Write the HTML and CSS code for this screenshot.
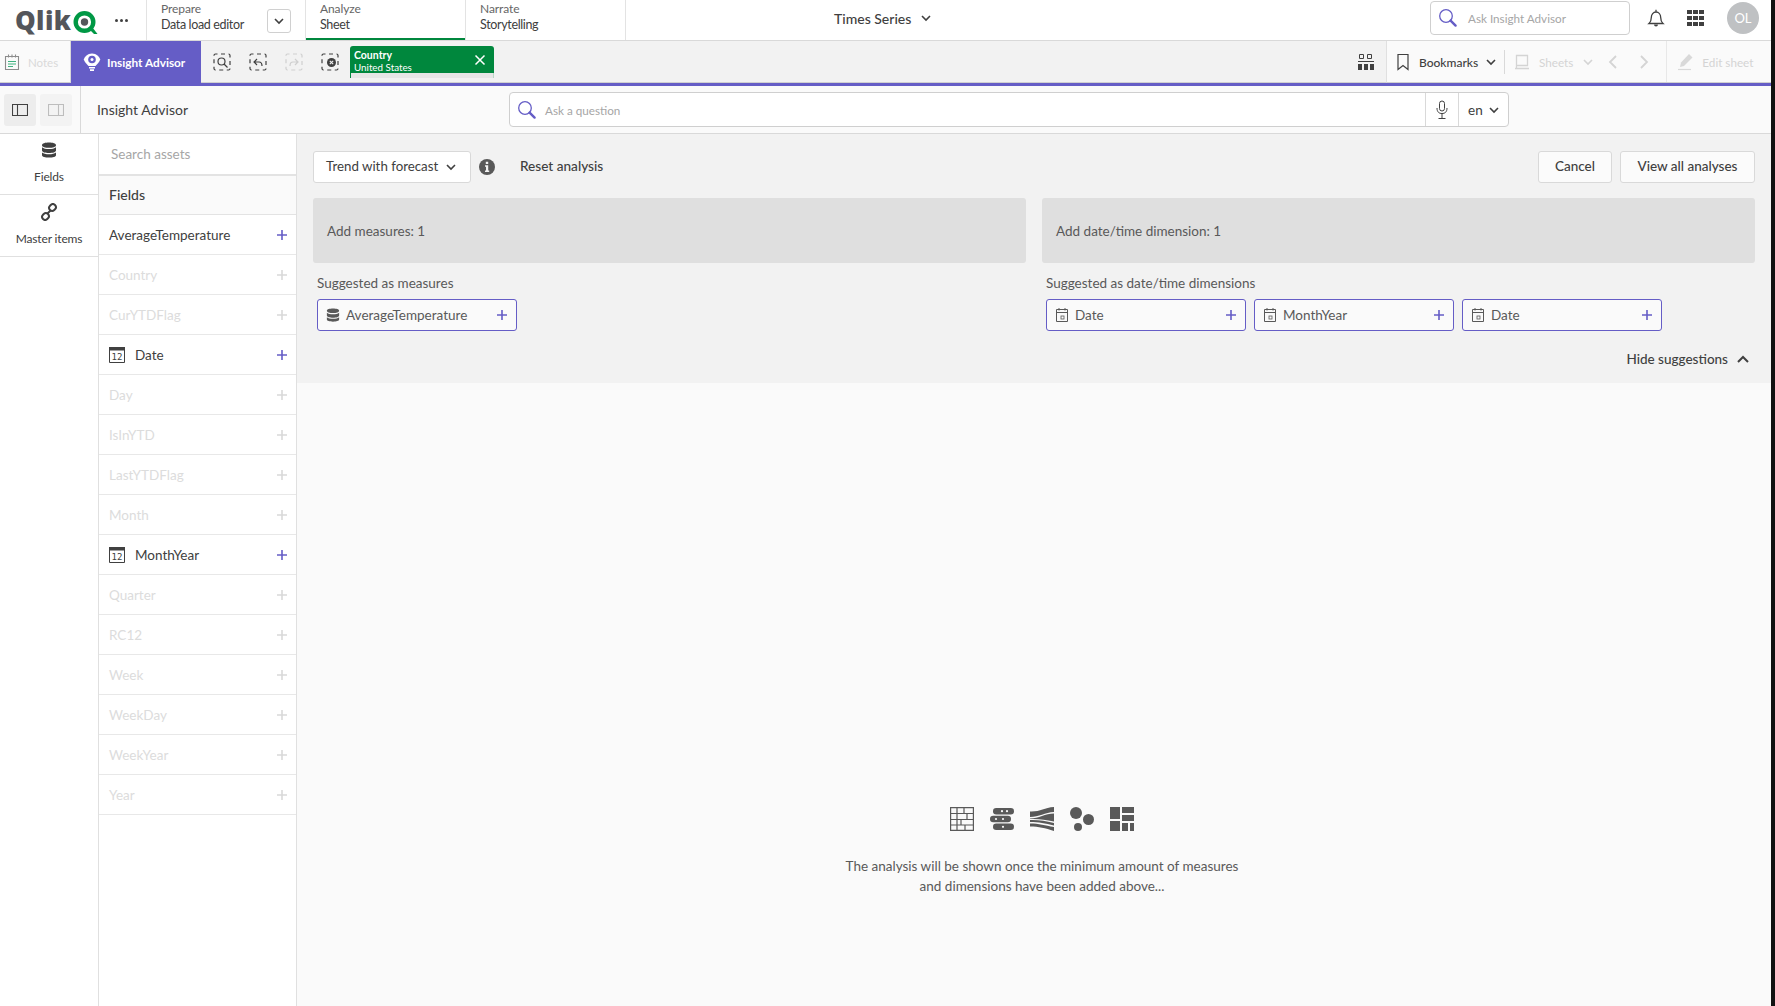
FILE: index.html
```html
<!DOCTYPE html>
<html lang="en">
<head>
<meta charset="utf-8">
<title>Insight Advisor</title>
<link rel="stylesheet" href="styles.css">
</head>
<body>
<svg class="defs" width="0" height="0">
  <defs>
    <symbol id="search" viewBox="0 0 20 20"><circle cx="8" cy="8" r="6.3" fill="none" stroke="#655dc6" stroke-width="1.3"/><path d="M12.6 12.6l5 5" stroke="#655dc6" stroke-width="2.4" stroke-linecap="round"/></symbol>
    <symbol id="chev" viewBox="0 0 12 12"><path d="M2 4l4 4 4-4" fill="none" stroke="currentColor" stroke-width="1.6"/></symbol>
    <symbol id="plus" viewBox="0 0 12 12"><path d="M6 1v10M1 6h10" stroke="currentColor" stroke-width="1.6"/></symbol>
    <symbol id="db" viewBox="0 0 16 16"><path fill="currentColor" d="M1 3.2C1 1.4 4.2.6 8 .6s7 .8 7 2.6-3.2 2.6-7 2.6-7-.8-7-2.6zM1 5.3C2.5 6.7 5 7 8 7s5.500-.3 7-1.700v3.200C15 10.200 11.800 11 8 11S1 10.200 1 8.500zM1 10.500C2.500 11.900 5 12.200 8 12.200s5.500-.3 7-1.700v2.700C15 14.900 11.800 15.600 8 15.600S1 14.900 1 13.200z"/></symbol>
    <symbol id="cal" viewBox="0 0 14 16"><path fill="none" stroke="currentColor" d="M1.500 2.500h11v12h-11zM1.500 5.500h11M4 1v2.500M10 1v2.500"/><rect x="6" y="9" width="3" height="3" fill="none" stroke="currentColor" stroke-width=".8"/></symbol>
  </defs>
</svg>
<div class="app">
  <header class="topbar">
    <div class="brand">
      <span class="qlik">Qlik</span>
      <svg class="qmark" width="25" height="24" viewBox="0 0 25 24"><circle cx="11.500" cy="11" r="8.800" fill="none" stroke="#009845" stroke-width="4.400"/><circle cx="11.500" cy="11" r="3.700" fill="#54565b"/><path d="M15 17l6 6h3.500l-5-6.500z" fill="#009845"/></svg>
      <span class="dots"><i></i><i></i><i></i></span>
    </div>
    <div class="nav-tab nav-prepare"><span class="nav-top">Prepare</span><span class="nav-main">Data load editor</span>
      <span class="nav-drop"><svg width="12" height="12"><use href="#chev"/></svg></span></div>
    <div class="nav-tab nav-active"><span class="nav-top">Analyze</span><span class="nav-main">Sheet</span></div>
    <div class="nav-tab"><span class="nav-top">Narrate</span><span class="nav-main">Storytelling</span></div>
    <div class="app-title">Times Series<svg width="12" height="12"><use href="#chev"/></svg></div>
    <div class="top-search"><svg width="20" height="20"><use href="#search"/></svg><span>Ask Insight Advisor</span></div>
    <svg class="bell" width="18" height="20" viewBox="0 0 18 20"><path fill="none" stroke="#404040" stroke-width="1.300" d="M2 15.500c1.800-1.500 2.300-3 2.300-6 0-3.200 2-5.500 4.700-5.500s4.700 2.300 4.700 5.500c0 3 .5 4.500 2.300 6zM9 1.800V4"/><path d="M7 16.500a2 2 0 0 0 4 0z" fill="#404040"/></svg>
    <div class="apps"><i></i><i></i><i></i><i></i><i></i><i></i><i></i><i></i><i></i></div>
    <div class="avatar">OL</div>
  </header>

  <div class="toolbar">
    <div class="tb-notes">
      <svg width="16" height="18" viewBox="0 0 16 18"><path fill="none" stroke="#8c8c8c" stroke-width="1.100" d="M1.500 3.500h13v13h-13zM4.500 1.500v3M8 1.500v3M11.500 1.500v3"/><path stroke="#3fb27f" stroke-width="1.200" d="M4 8.500h8M4 11h8M4 13.500h5"/></svg>
      <span>Notes</span>
    </div>
    <div class="tb-insight">
      <svg width="18" height="20" viewBox="0 0 18 20"><path fill="#fff" d="M9 1.500C4.500 1.500 1.500 5 .8 7.500c.7 2.500 3 4.800 4.700 6.500h7c1.700-1.700 4-4 4.700-6.500C16.500 5 13.500 1.500 9 1.500z"/><circle cx="9" cy="7.500" r="3.800" fill="#655dc6"/><circle cx="9" cy="7.500" r="1.500" fill="#fff"/><path fill="#fff" d="M6 15h6v1.500H6zM7 17.300h4V19H7z"/></svg>
      <span>Insight Advisor</span>
    </div>
    <div class="tb-middle">
      <div class="sel-tools">
        <svg class="st" width="18" height="18" viewBox="0 0 18 18"><rect x="1" y="1" width="16" height="16" rx="1.500" class="dash"/><circle cx="8.500" cy="8.500" r="3.500" class="ln"/><path d="M11 11l3.500 3.500" class="ln"/></svg>
        <svg class="st" width="18" height="18" viewBox="0 0 18 18"><rect x="1" y="1" width="16" height="16" rx="1.500" class="dash"/><path d="M8 6L5 9l3 3M5 9h5c2 0 3 1 3 4" class="ln"/></svg>
        <svg class="st st-off" width="18" height="18" viewBox="0 0 18 18"><rect x="1" y="1" width="16" height="16" rx="1.500" class="dash"/><path d="M10 6l3 3-3 3M13 9H8c-2 0-3 1-3 4" class="ln"/></svg>
        <svg class="st" width="18" height="18" viewBox="0 0 18 18"><rect x="1" y="1" width="16" height="16" rx="1.500" class="dash"/><circle cx="10.500" cy="9.500" r="4.500" fill="#404040"/><path d="M8.800 7.800l3.400 3.400M12.200 7.800l-3.400 3.400" stroke="#f2f2f2" stroke-width="1.100"/></svg>
      </div>
      <div class="chip-sel">
        <div class="chip-green">
          <div class="chip-txt"><span class="chip-f">Country</span><span class="chip-v">United States</span></div>
          <svg width="12" height="12" viewBox="0 0 12 12"><path d="M1.500 1.500l9 9M10.500 1.500l-9 9" stroke="#fff" stroke-width="1.500"/></svg>
        </div>
        <div class="chip-bar"></div>
      </div>
      <svg class="grid-ic" width="16" height="18" viewBox="0 0 16 18"><path fill="none" stroke="#404040" d="M1.500 1.500h4v4h-4zM9.500 1.500h4v4h-4z"/><path fill="#404040" d="M0 8h16v1H0zM0 11h4v6H0zM6 11h4v6H6zM12 11h4v6h-4z"/></svg>
    </div>
    <div class="tb-right">
      <svg class="bm" width="12" height="18" viewBox="0 0 12 18"><path fill="none" stroke="#404040" stroke-width="1.200" d="M1 1.500h10v15l-5-4-5 4z"/></svg>
      <span class="bm-txt">Bookmarks</span>
      <svg class="bm-chev" width="12" height="12"><use href="#chev"/></svg>
      <span class="tb-sep"></span>
      <svg class="off-ic" width="16" height="16" viewBox="0 0 16 16"><path fill="none" stroke="#d4d4d4" stroke-width="1.300" d="M2.500 1.500h11v10h-11zM1 14.500h14M2.500 11.500v3"/></svg>
      <span class="off-txt off-sheets">Sheets</span>
      <svg class="off-chev" width="12" height="12"><use href="#chev"/></svg>
      <svg class="off-l" width="10" height="14" viewBox="0 0 10 14"><path d="M8 1L2 7l6 6" fill="none" stroke="#d4d4d4" stroke-width="1.800"/></svg>
      <svg class="off-r" width="10" height="14" viewBox="0 0 10 14"><path d="M2 1l6 6-6 6" fill="none" stroke="#d4d4d4" stroke-width="1.800"/></svg>
      <span class="tb-edge"></span>
      <svg class="edit-ic" width="16" height="18" viewBox="0 0 16 18"><path fill="#d9d9d9" d="M11 1l3.500 3.500L6 13l-4 1 1-4.500z"/><path d="M0 16.500h13" stroke="#d9d9d9" stroke-width="1.200"/></svg>
      <span class="off-txt off-edit">Edit sheet</span>
    </div>
  </div>

  <div class="subbar">
    <div class="toggles">
      <span class="tog tog-on"><svg width="16" height="12" viewBox="0 0 16 12"><path fill="none" stroke="#404040" stroke-width="1.100" d="M.5.500h15v11H.5zM5.500.500v11"/></svg></span>
      <span class="tog"><svg width="16" height="12" viewBox="0 0 16 12"><path fill="none" stroke="#bdbdbd" stroke-width="1.100" d="M.5.500h15v11H.5zM10.500.500v11"/></svg></span>
    </div>
    <div class="sub-title">Insight Advisor</div>
    <div class="ask">
      <div class="ask-input"><svg width="20" height="20"><use href="#search"/></svg><span>Ask a question</span></div>
      <div class="ask-mic"><svg width="12" height="20" viewBox="0 0 12 20"><rect x="3.500" y="1" width="5" height="10" rx="2.500" fill="none" stroke="#404040"/><path d="M1 8c0 4 2 5.500 5 5.500S11 12 11 8M6 13.500V18M2.500 18.500h7" fill="none" stroke="#404040"/></svg></div>
      <div class="ask-lang">en<svg width="12" height="12"><use href="#chev"/></svg></div>
    </div>
  </div>

  <div class="workspace">
    <nav class="rail">
      <div class="rail-item rail-fields">
        <svg width="16" height="16"><use href="#db"/></svg><span>Fields</span>
      </div>
      <div class="rail-item rail-master">
        <svg width="18" height="18" viewBox="0 0 18 18"><g fill="none" stroke="#404040" stroke-width="2"><path d="M7.500 10.500l3-3"/><rect x="9" y="1.500" width="7" height="6" rx="3" transform="rotate(-45 12.500 4.500)"/><rect x="2" y="10.500" width="7" height="6" rx="3" transform="rotate(-45 5.500 13.500)"/></g></svg><span>Master items</span>
      </div>
    </nav>
    <aside class="assets">
      <div class="assets-search">Search assets</div>
      <div class="assets-head">Fields</div>
      <div class="row"><span>AverageTemperature</span><svg width="12" height="12"><use href="#plus"/></svg></div>
      <div class="row row-off"><span>Country</span><svg width="12" height="12"><use href="#plus"/></svg></div>
      <div class="row row-off"><span>CurYTDFlag</span><svg width="12" height="12"><use href="#plus"/></svg></div>
      <div class="row"><svg class="cal12" width="16" height="17" viewBox="0 0 16 17"><path fill="none" stroke="#404040" d="M.5 1.500h15v15H.5z"/><path fill="#404040" d="M0 1h16v3.500H0z"/><text x="8" y="14" text-anchor="middle" class="cal-num">12</text></svg><span>Date</span><svg width="12" height="12"><use href="#plus"/></svg></div>
      <div class="row row-off"><span>Day</span><svg width="12" height="12"><use href="#plus"/></svg></div>
      <div class="row row-off"><span>IsInYTD</span><svg width="12" height="12"><use href="#plus"/></svg></div>
      <div class="row row-off"><span>LastYTDFlag</span><svg width="12" height="12"><use href="#plus"/></svg></div>
      <div class="row row-off"><span>Month</span><svg width="12" height="12"><use href="#plus"/></svg></div>
      <div class="row"><svg class="cal12" width="16" height="17" viewBox="0 0 16 17"><path fill="none" stroke="#404040" d="M.5 1.500h15v15H.5z"/><path fill="#404040" d="M0 1h16v3.500H0z"/><text x="8" y="14" text-anchor="middle" class="cal-num">12</text></svg><span>MonthYear</span><svg width="12" height="12"><use href="#plus"/></svg></div>
      <div class="row row-off"><span>Quarter</span><svg width="12" height="12"><use href="#plus"/></svg></div>
      <div class="row row-off"><span>RC12</span><svg width="12" height="12"><use href="#plus"/></svg></div>
      <div class="row row-off"><span>Week</span><svg width="12" height="12"><use href="#plus"/></svg></div>
      <div class="row row-off"><span>WeekDay</span><svg width="12" height="12"><use href="#plus"/></svg></div>
      <div class="row row-off"><span>WeekYear</span><svg width="12" height="12"><use href="#plus"/></svg></div>
      <div class="row row-off"><span>Year</span><svg width="12" height="12"><use href="#plus"/></svg></div>
    </aside>
    <main class="main">
      <section class="panel">
        <div class="controls">
          <div class="btn btn-drop">Trend with forecast<svg width="12" height="12"><use href="#chev"/></svg></div>
          <svg class="info" width="16" height="16" viewBox="0 0 16 16"><circle cx="8" cy="8" r="8" fill="#595959"/><path fill="#f2f2f2" d="M6.800 2.800h2.400v2.200H6.800zM6 6.300h3.200v5.200h1v1.500H6v-1.500h1V7.800H6z"/></svg>
          <span class="reset">Reset analysis</span>
          <div class="btn btn-cancel">Cancel</div>
          <div class="btn btn-view">View all analyses</div>
        </div>
        <div class="columns">
          <div class="col">
            <div class="drop">Add measures: 1</div>
            <div class="sug-label">Suggested as measures</div>
            <div class="chips">
              <div class="chip"><svg class="ci" width="14" height="14"><use href="#db"/></svg><span>AverageTemperature</span><svg class="cp" width="12" height="12"><use href="#plus"/></svg></div>
            </div>
          </div>
          <div class="col">
            <div class="drop">Add date/time dimension: 1</div>
            <div class="sug-label">Suggested as date/time dimensions</div>
            <div class="chips">
              <div class="chip"><svg class="ci" width="14" height="16"><use href="#cal"/></svg><span>Date</span><svg class="cp" width="12" height="12"><use href="#plus"/></svg></div>
              <div class="chip"><svg class="ci" width="14" height="16"><use href="#cal"/></svg><span>MonthYear</span><svg class="cp" width="12" height="12"><use href="#plus"/></svg></div>
              <div class="chip"><svg class="ci" width="14" height="16"><use href="#cal"/></svg><span>Date</span><svg class="cp" width="12" height="12"><use href="#plus"/></svg></div>
            </div>
          </div>
        </div>
        <div class="hide-row"><span>Hide suggestions</span><svg width="14" height="10" viewBox="0 0 14 10"><path d="M2 8l5-5 5 5" fill="none" stroke="#404040" stroke-width="2"/></svg></div>
      </section>
      <section class="empty">
        <div class="empty-icons">
          <svg width="24" height="24" viewBox="0 0 24 24"><path fill="none" stroke="#595959" stroke-width="1.200" d="M.6.600h22.800v22.800H.6zM7 .6v22.800M.6 6.500h22.800M.6 12.500h22.800M.6 18h22.800M14 .6v6M17 6.500v6M11 12.500V18M15 18v5.400"/></svg>
          <svg width="24" height="24" viewBox="0 0 24 24"><g fill="#595959"><rect x="3" y="1" width="21" height="6.500" rx="3.200"/><rect y="8.800" width="21" height="6.500" rx="3.200"/><rect x="3" y="16.500" width="21" height="6.500" rx="3.200"/></g><g fill="#fafafa"><circle cx="12" cy="4.200" r="1.100"/><circle cx="17" cy="4.200" r="1.100"/><circle cx="6" cy="12" r="1.100"/><circle cx="13" cy="12" r="1.100"/><circle cx="13" cy="19.800" r="1.100"/></g></svg>
          <svg width="24" height="24" viewBox="0 0 24 24"><path fill="#595959" d="M0 4.500C10 5 14 .5 24 0v5C15 5.500 9 10 0 10zM0 11.500C9 11.500 15 6.500 24 6.500v8c-9-2-15-2.800-24-2.500zM0 13c9-.3 15 1 24 3v2.500C15 16.500 9 15 0 15zM0 16.500c9 0 15 2 24 3.500v4c-9-3-15-4.500-24-4.500z"/></svg>
          <svg width="24" height="24" viewBox="0 0 24 24"><circle cx="6" cy="6" r="6" fill="#595959"/><circle cx="18.500" cy="12.500" r="5.500" fill="#595959"/><circle cx="8" cy="20" r="4" fill="#595959"/></svg>
          <svg width="24" height="24" viewBox="0 0 24 24"><path fill="#595959" d="M0 0h10v12H0zM12 0h12v6H12zM12 8h12v6H12zM0 14h10v10H0zM12 16h6v8h-6zM20 16h4v8h-4z"/></svg>
        </div>
        <p class="empty-msg">The analysis will be shown once the minimum amount of measures<br>and dimensions have been added above...</p>
      </section>
    </main>
  </div>
</div>
</body>
</html>
```

FILE: styles.css
```css
* { box-sizing: border-box; }
html, body { margin: 0; height: 100%; }
body {
  background: #111;
  font-family: "Lato", "Open Sans", sans-serif;
  font-size: 13.5px;
  color: #404040;
  overflow: hidden;
}
.defs { position: absolute; }
svg { display: block; flex: none; }
.app {
  width: 1771px;
  height: 1006px;
  display: flex;
  flex-direction: column;
  background: #fff;
  overflow: hidden;
}

/* top bar */
.topbar {
  height: 41px;
  flex: none;
  display: flex;
  align-items: stretch;
  padding-right: 12px;
  border-bottom: 1px solid #d9d9d9;
  background: #fff;
}
.brand {
  width: 147px;
  display: flex;
  align-items: center;
  padding-left: 15px;
  border-right: 1px solid #e3e3e3;
}
.qlik {
  font-family: "Open Sans", sans-serif;
  font-weight: 800;
  font-size: 26px;
  line-height: 36px;
  letter-spacing: .4px;
  color: #54565b;
  width: 58px;
}
.qmark { margin-top: 5px; }
.dots { display: flex; gap: 2px; margin-left: 17px; }
.dots i { width: 3px; height: 3px; border-radius: 50%; background: #404040; }
.nav-tab {
  position: relative;
  width: 160px;
  display: flex;
  flex-direction: column;
  padding: 1px 0 0 14px;
  border-right: 1px solid #e3e3e3;
  line-height: 16px;
}
.nav-prepare { width: 159px; }
.nav-top { font-size: 12px; letter-spacing: -.1px; color: #666; }
.nav-main { font-size: 12.500px; letter-spacing: -.35px; color: #404040; }
.nav-active { box-shadow: inset 0 -2px 0 #00873d; }
.nav-drop {
  position: absolute;
  left: 120px;
  top: 9px;
  width: 24px;
  height: 24px;
  border: 1px solid #d0d0d0;
  border-radius: 3px;
  display: flex;
  align-items: center;
  justify-content: center;
}
.app-title {
  margin-left: 208px;
  display: flex;
  align-items: center;
  gap: 9px;
  font-size: 14px;
  font-weight: 500;
  padding-bottom: 4px;
}
.top-search {
  margin-left: auto;
  width: 200px;
  height: 34px;
  margin-top: 1px;
  border: 1px solid #cfcfcf;
  border-radius: 4px;
  display: flex;
  align-items: center;
  padding-left: 7px;
  gap: 10px;
  font-size: 11.700px;
  color: #a6a6a6;
}
.bell { margin: 8px 0 0 17px; }
.apps {
  margin: 10px 0 0 22px;
  width: 17px;
  height: 16px;
  display: grid;
  grid-template-columns: repeat(3, 5px);
  grid-template-rows: repeat(3, 4px);
  gap: 2px 1px;
}
.apps i { background: #404040; }
.avatar {
  margin: 2px 0 0 23px;
  width: 32px;
  height: 32px;
  border-radius: 50%;
  background: #bfc1c3;
  color: #fff;
  font-size: 13px;
  display: flex;
  align-items: center;
  justify-content: center;
}

/* toolbar */
.toolbar {
  height: 45px;
  flex: none;
  display: flex;
  border-bottom: 3px solid #655dc6;
}
.tb-notes {
  width: 71px;
  display: flex;
  align-items: center;
  padding-left: 4px;
  gap: 8px;
  background: #fafafa;
  color: #d9d9d9;
  font-size: 11.500px;
  border-bottom: 1px solid #d0d0d0;
  border-right: 1px solid #d9d9d9;
}
.tb-notes span, .tb-insight span { padding-top: 1px; }
.tb-insight {
  width: 130px;
  display: flex;
  align-items: center;
  padding-left: 12px;
  gap: 6px;
  background: #655dc6;
  color: #fff;
  font-size: 11.800px;
  font-weight: 700;
}
.tb-middle {
  width: 1185px;
  display: flex;
  align-items: center;
  background: #f2f2f2;
  border-bottom: 1px solid #d0d0d0;
  padding-left: 12px;
}
.sel-tools { display: flex; gap: 18px; }
.dash { fill: none; stroke: #404040; stroke-width: 1.200; stroke-dasharray: 4 3.500; stroke-dashoffset: 2; }
.ln { fill: none; stroke: #404040; stroke-width: 1.200; }
.st-off .dash, .st-off .ln { stroke: #cfcfcf; }
.chip-sel {
  margin-left: 11px;
  width: 144px;
  height: 32px;
  margin-top: 1px;
  display: flex;
  flex-direction: column;
}
.chip-green {
  height: 27px;
  background: #00873d;
  border-radius: 3px 3px 0 0;
  display: flex;
  align-items: center;
  justify-content: space-between;
  padding: 0 8px 0 4px;
  color: #fff;
}
.chip-txt { display: flex; flex-direction: column; padding-top: 3px; }
.chip-f { font-size: 10.500px; line-height: 12px; font-weight: 700; }
.chip-v { font-size: 9.800px; line-height: 12px; }
.chip-bar { height: 5px; background: #e6e6e6; border-left: 1px solid #00873d; border-right: 1px solid #b6d9c5; }
.grid-ic { margin-left: auto; margin-right: 12px; }
.tb-right {
  flex: 1;
  display: flex;
  align-items: center;
  background: #fafafa;
  border-left: 1px solid #e0e0e0;
  border-bottom: 1px solid #d0d0d0;
}
.bm { margin-left: 10px; }
.bm-txt { margin-left: 10px; width: 60px; padding-top: 2px; font-size: 12px; font-weight: 500; white-space: nowrap; }
.bm-chev { margin-left: 6px; }
.tb-sep { width: 1px; height: 24px; background: #d9d9d9; margin-left: 7px; }
.off-ic { margin-left: 9px; }
.off-txt { margin-left: 9px; padding-top: 1px; color: #d4d4d4; white-space: nowrap; }
.off-sheets { font-size: 11.700px; }
.off-edit { margin-left: 8px; font-size: 11.700px; }
.off-chev { margin-left: 9px; color: #d4d4d4; }
.off-l { margin-left: 14px; }
.off-r { margin-left: 21px; }
.tb-edge { width: 1px; align-self: stretch; background: #e8e8e8; margin-left: 17px; }
.edit-ic { margin-left: 11px; }

/* sub bar */
.subbar {
  height: 48px;
  flex: none;
  display: flex;
  align-items: center;
  background: #fafafa;
  border-bottom: 1px solid #d9d9d9;
}
.toggles {
  width: 81px;
  height: 47px;
  display: flex;
  align-items: center;
  padding-left: 4px;
  gap: 4px;
  border-right: 1px solid #d9d9d9;
}
.tog {
  width: 32px;
  height: 32px;
  border-radius: 3px;
  background: #f3f3f3;
  display: flex;
  align-items: center;
  justify-content: center;
}
.tog-on { background: #ededed; }
.sub-title { margin-left: 16px; width: 412px; font-size: 14px; }
.ask {
  width: 1000px;
  height: 35px;
  display: flex;
  background: #fff;
  border: 1px solid #cfcfcf;
  border-radius: 4px;
}
.ask-input {
  width: 916px;
  display: flex;
  align-items: center;
  padding-left: 7px;
  gap: 8px;
  font-size: 11.700px;
  color: #a6a6a6;
  border-right: 1px solid #d9d9d9;
}
.ask-input span { padding-top: 1px; }
.ask-mic {
  width: 33px;
  display: flex;
  align-items: center;
  justify-content: center;
  border-right: 1px solid #d9d9d9;
}
.ask-lang {
  flex: 1;
  display: flex;
  align-items: center;
  padding-left: 9px;
  gap: 5px;
  font-size: 13.500px;
}

/* workspace */
.workspace { flex: 1; display: flex; min-height: 0; }
.rail { width: 99px; flex: none; border-right: 1px solid #e0e0e0; background: #fff; }
.rail-item {
  height: 62px;
  display: flex;
  flex-direction: column;
  align-items: center;
  border-bottom: 1px solid #e0e0e0;
  font-size: 12px;
  letter-spacing: -.15px;
  line-height: 16px;
}
.rail-fields { height: 61px; padding-top: 8px; gap: 11px; }
.rail-master { padding-top: 8px; gap: 10px; }
.assets { width: 198px; flex: none; border-right: 1px solid #e0e0e0; background: #fff; }
.assets-search {
  height: 42px;
  padding: 11px 0 0 12px;
  line-height: 18px;
  color: #a6a6a6;
  border-bottom: 2px solid #e3e3e3;
}
.assets-head {
  height: 39px;
  display: flex;
  align-items: center;
  padding: 0 0 1px 10px;
  background: #fafafa;
  font-weight: 500;
  font-size: 14px;
  border-bottom: 1px solid #e3e3e3;
}
.row {
  height: 40px;
  display: flex;
  align-items: center;
  padding: 0 8px 0 10px;
  border-bottom: 1px solid #e8e8e8;
  color: #404040;
}
.row > span { flex: 1; }
.row > svg:last-child { color: #655dc6; }
.row-off { color: #dcdcdc; }
.row-off > svg:last-child { color: #d9d9d9; }
.cal12 { margin-right: 10px; }
.cal-num { font-family: "DejaVu Sans Mono", monospace; font-size: 9px; fill: #404040; }

/* main */
.main { flex: 1; display: flex; flex-direction: column; min-width: 0; }
.panel { height: 249px; flex: none; background: #f2f2f2; padding: 17px 16px 0; }
.controls { display: flex; align-items: center; height: 32px; }
.btn {
  height: 32px;
  padding-bottom: 2px;
  background: #fff;
  border: 1px solid #d9d9d9;
  border-radius: 3px;
  display: flex;
  align-items: center;
  font-size: 13.500px;
  white-space: nowrap;
}
.btn svg { margin-top: 2px; }
.btn-drop { width: 158px; padding-left: 12px; justify-content: space-between; padding-right: 13px; background: #fff; font-size: 13.300px; }
.info { margin-left: 8px; }
.reset { margin-left: 25px; padding-bottom: 2px; font-weight: 500; font-size: 13.600px; }
.btn-cancel { margin-left: auto; width: 74px; justify-content: center; background: #fbfbfb; font-weight: 500; }
.btn-view { margin-left: 8px; width: 135px; justify-content: center; background: #fbfbfb; font-weight: 500; }
.columns { display: grid; grid-template-columns: 1fr 1fr; gap: 16px; margin-top: 15px; }
.drop {
  height: 65px;
  background: #dfdfdf;
  border-radius: 3px;
  display: flex;
  align-items: center;
  padding: 0 14px;
  color: #595959;
}
.sug-label { margin: 10px 0 6px 4px; line-height: 20px; color: #595959; }
.chips { display: flex; gap: 8px; margin-left: 4px; }
.chip {
  width: 200px;
  height: 32px;
  display: flex;
  align-items: center;
  background: #fafafa;
  border: 1.500px solid #655dc6;
  border-radius: 3px;
  padding: 0 8px;
  color: #595959;
}
.chip .ci { color: #595959; margin-right: 6px; }
.chip span { flex: 1; }
.chip .cp { color: #655dc6; }
.hide-row {
  margin-top: 18px;
  display: flex;
  justify-content: flex-end;
  align-items: center;
  gap: 8px;
  line-height: 20px;
  padding-right: 5px;
  font-weight: 500;
}
.empty {
  flex: 1;
  background: #fafafa;
  display: flex;
  flex-direction: column;
  align-items: center;
  padding: 424px 0 0 16px;
}
.empty-icons { display: flex; gap: 16px; }
.empty-msg {
  margin: 25px 0 0;
  text-align: center;
  line-height: 20px;
  color: #595959;
}
```
